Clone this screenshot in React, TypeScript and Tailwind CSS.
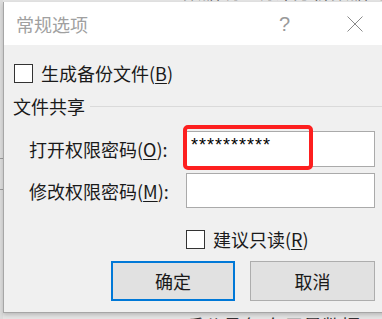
const cjk = "font-['Microsoft_YaHei','Noto_Sans_CJK_SC',sans-serif]"

function Mn({ c }: { c: string }) {
  return <span className="underline underline-offset-2 decoration-1">{c}</span>
}

function Check({ label }: { label: React.ReactNode }) {
  return (
    <div className="flex items-center gap-[8px]">
      <div className="w-[19px] h-[19px] border border-[#333] bg-white" />
      <span className="text-[18px] leading-[20px] text-[#1a1a1a]">{label}</span>
    </div>
  )
}

export default function App() {
  return (
    <div className={`relative w-[382px] h-[319px] overflow-hidden bg-[#e4e4e4] ${cjk}`}>
      {/* document behind the dialog */}
      <div className="absolute left-0 top-0 w-[3px] h-full bg-[#dcdcdc]">
        <div className="absolute top-[158px] w-full h-px bg-[#9a9a9a]" />
        <div className="absolute top-[189px] w-full h-px bg-[#9a9a9a]" />
      </div>
      <div className="absolute left-[183px] top-[-19px] text-[18px] leading-[20px] text-[#444] whitespace-nowrap tracking-[1px]">
        数据统 &nbsp;&nbsp;统计分析数据 &nbsp;据
      </div>
      <div className="absolute left-[185px] top-[315px] text-[19px] leading-[22px] text-[#333] whitespace-nowrap">
        后公承色 存用量数据
      </div>

      {/* dialog */}
      <div className="relative z-10 ml-[3px] mt-[2px] w-[400px] h-[311px] border-l border-b border-[#a6a6a6] bg-[#f0f0f0] shadow-[0_2px_4px_rgba(0,0,0,0.18)] flex flex-col">
        <div className="h-[43px] bg-white flex items-center pl-[12px]">
          <span className="text-[18px] leading-[20px] text-[#a0a0a0]">常规选项</span>
          <span className="ml-[191px] text-[20px] leading-[20px] text-[#9a9a9a] font-['Liberation_Sans',sans-serif] font-light">?</span>
          <svg className="ml-[57px]" width="16" height="16" viewBox="0 0 16 16">
            <path d="M0.5 0.5 L15.5 15.5 M15.5 0.5 L0.5 15.5" stroke="#8a8a8a" strokeWidth="1" fill="none" />
          </svg>
        </div>

        <div className="pl-[10px] pt-[18px]">
          <Check label={<>生成备份文件(<Mn c="B" />)</>} />
        </div>

        <div className="flex items-center mt-[13px] pl-[9px] h-[20px]">
          <span className="text-[18px] leading-[20px] text-[#1a1a1a]">文件共享</span>
          <div className="flex-1 h-px bg-[#dadada] ml-[5px] mt-px" />
        </div>

        <div className="mt-[15px] w-[372px] grid grid-cols-[157px_189px] pl-[25px] gap-y-[6px] items-center">
          <span className="text-[18px] leading-[20px] text-[#1a1a1a]">打开权限密码(<Mn c="O" />):</span>
          <div className="relative h-[36px] border border-[#aaaaaa] bg-white">
            <span className="absolute left-[4px] top-[3px] text-[18px] leading-[20px] text-black font-['Liberation_Sans',sans-serif] tracking-[1px]">**********</span>
            <div className="absolute left-[-4px] top-[-7px] w-[130px] h-[45px] border-[4px] border-[#fd1f1f] rounded-[5px]" />
          </div>
          <span className="text-[18px] leading-[20px] text-[#1a1a1a]">修改权限密码(<Mn c="M" />):</span>
          <div className="h-[35px] border border-[#aaaaaa] bg-white" />
        </div>

        <div className="mt-[21px] pl-[182px]">
          <Check label={<>建议只读(<Mn c="R" />)</>} />
        </div>

        <div className="mt-[12px] pl-[107px] flex gap-[15px]">
          <button className="w-[124px] h-[40px] border-2 border-[#0078d7] bg-[#e1e1e1] text-[18px] leading-[20px] text-[#1a1a1a]">确定</button>
          <button className="w-[125px] h-[40px] border border-[#adadad] bg-[#e1e1e1] text-[18px] leading-[20px] text-[#1a1a1a]">取消</button>
        </div>
      </div>
    </div>
  )
}
